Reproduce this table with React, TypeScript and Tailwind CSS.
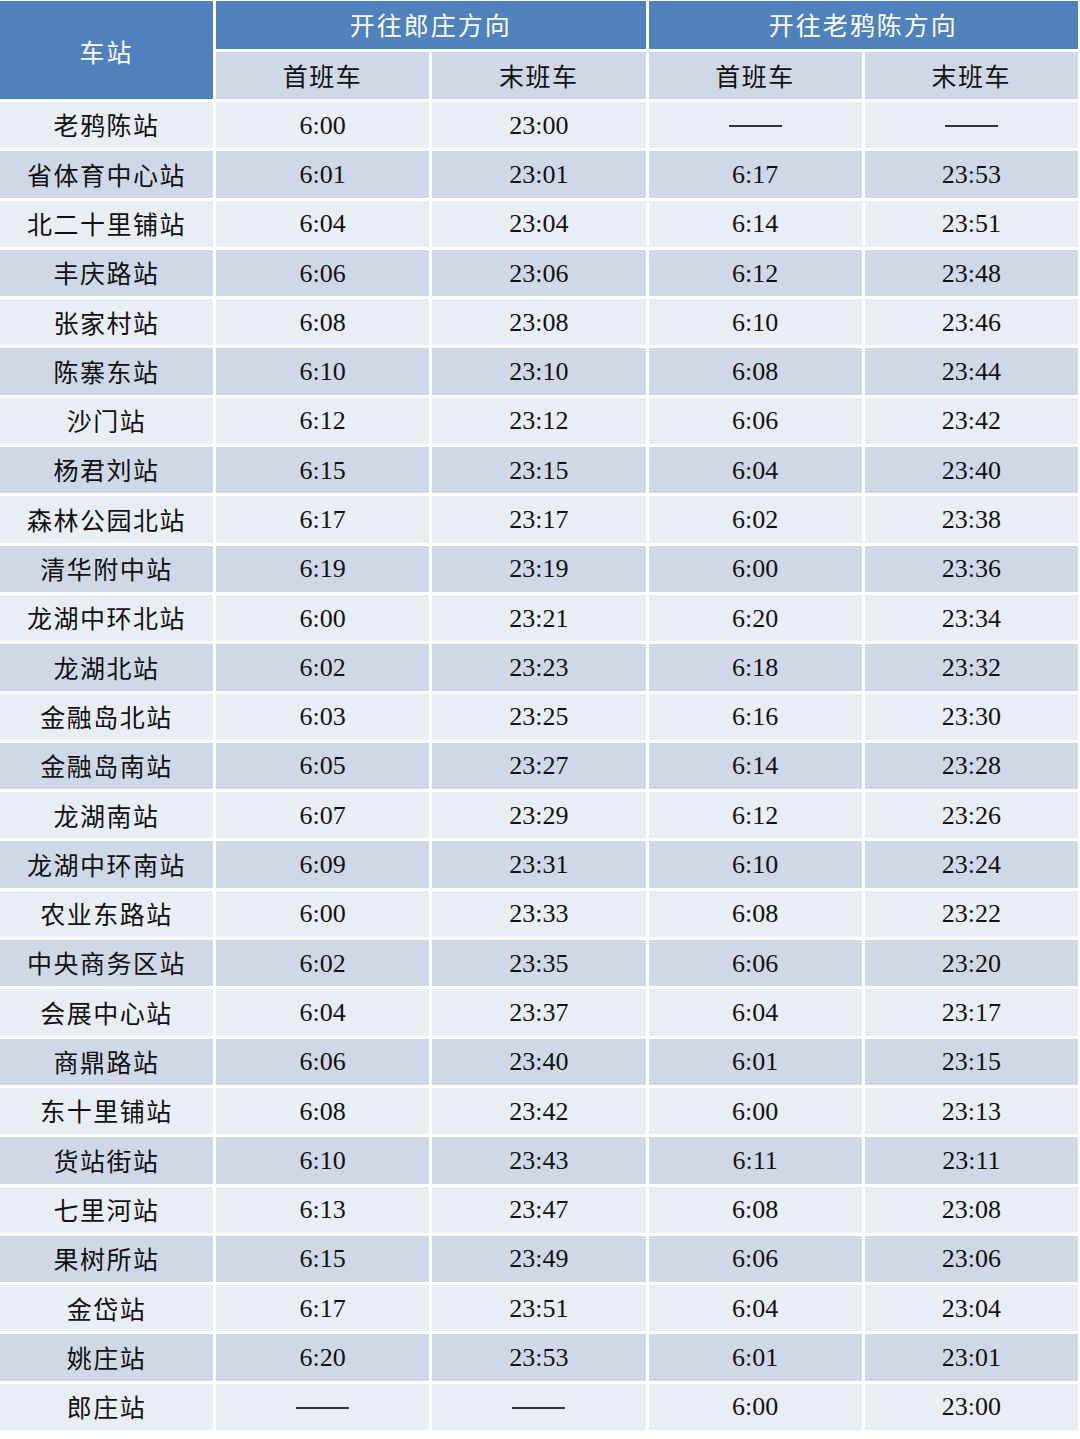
import React from "react";

const rows: [string, string, string, string, string][] = [
  ["老鸦陈站", "6:00", "23:00", "——", "——"],
  ["省体育中心站", "6:01", "23:01", "6:17", "23:53"],
  ["北二十里铺站", "6:04", "23:04", "6:14", "23:51"],
  ["丰庆路站", "6:06", "23:06", "6:12", "23:48"],
  ["张家村站", "6:08", "23:08", "6:10", "23:46"],
  ["陈寨东站", "6:10", "23:10", "6:08", "23:44"],
  ["沙门站", "6:12", "23:12", "6:06", "23:42"],
  ["杨君刘站", "6:15", "23:15", "6:04", "23:40"],
  ["森林公园北站", "6:17", "23:17", "6:02", "23:38"],
  ["清华附中站", "6:19", "23:19", "6:00", "23:36"],
  ["龙湖中环北站", "6:00", "23:21", "6:20", "23:34"],
  ["龙湖北站", "6:02", "23:23", "6:18", "23:32"],
  ["金融岛北站", "6:03", "23:25", "6:16", "23:30"],
  ["金融岛南站", "6:05", "23:27", "6:14", "23:28"],
  ["龙湖南站", "6:07", "23:29", "6:12", "23:26"],
  ["龙湖中环南站", "6:09", "23:31", "6:10", "23:24"],
  ["农业东路站", "6:00", "23:33", "6:08", "23:22"],
  ["中央商务区站", "6:02", "23:35", "6:06", "23:20"],
  ["会展中心站", "6:04", "23:37", "6:04", "23:17"],
  ["商鼎路站", "6:06", "23:40", "6:01", "23:15"],
  ["东十里铺站", "6:08", "23:42", "6:00", "23:13"],
  ["货站街站", "6:10", "23:43", "6:11", "23:11"],
  ["七里河站", "6:13", "23:47", "6:08", "23:08"],
  ["果树所站", "6:15", "23:49", "6:06", "23:06"],
  ["金岱站", "6:17", "23:51", "6:04", "23:04"],
  ["姚庄站", "6:20", "23:53", "6:01", "23:01"],
  ["郎庄站", "——", "——", "6:00", "23:00"],
];

const cjk = "[font-family:Noto_Sans_CJK_SC,sans-serif]";
const serif = "[font-family:Liberation_Serif,serif]";

export default function App() {
  return (
    <div className="w-[1080px] h-[1439px] bg-white pt-px">
      <div className="w-[1078px] h-[1429px] grid grid-cols-[213px_1fr_1fr_1fr_1fr] grid-rows-[48px_47px_repeat(27,1fr)] gap-x-[3px] gap-y-[3px] text-[#111]">
        <div className={`row-span-2 bg-[#4f81bd] text-white text-[25px] tracking-[2px] flex items-center justify-center pt-[4px] ${cjk}`}>
          车站
        </div>
        <div className={`col-span-2 bg-[#4f81bd] text-white text-[25px] tracking-[2px] flex items-center justify-center ${cjk}`}>
          开往郎庄方向
        </div>
        <div className={`col-span-2 bg-[#4f81bd] text-white text-[25px] tracking-[2px] flex items-center justify-center ${cjk}`}>
          开往老鸦陈方向
        </div>
        {["首班车", "末班车", "首班车", "末班车"].map((t, i) => (
          <div key={i} className={`bg-[#d0d8e8] text-[25px] tracking-[1.5px] flex items-center justify-center ${cjk}`}>
            {t}
          </div>
        ))}
        {rows.map((r, ri) => {
          const bg = ri % 2 === 0 ? "bg-[#e9edf4]" : "bg-[#d0d8e8]";
          return (
            <React.Fragment key={ri}>
              <div className={`${bg} text-[25px] tracking-[1.5px] flex items-center justify-center ${cjk}`}>
                {r[0]}
              </div>
              {r.slice(1).map((v, ci) =>
                v === "——" ? (
                  <div key={ci} className={`${bg} flex items-center justify-center pt-[2px]`}>
                    <span className="block w-[53px] h-[1.5px] bg-[#333]" />
                  </div>
                ) : (
                  <div key={ci} className={`${bg} text-[26px] flex items-center justify-center ${serif}`}>
                    {v}
                  </div>
                )
              )}
            </React.Fragment>
          );
        })}
      </div>
    </div>
  );
}
